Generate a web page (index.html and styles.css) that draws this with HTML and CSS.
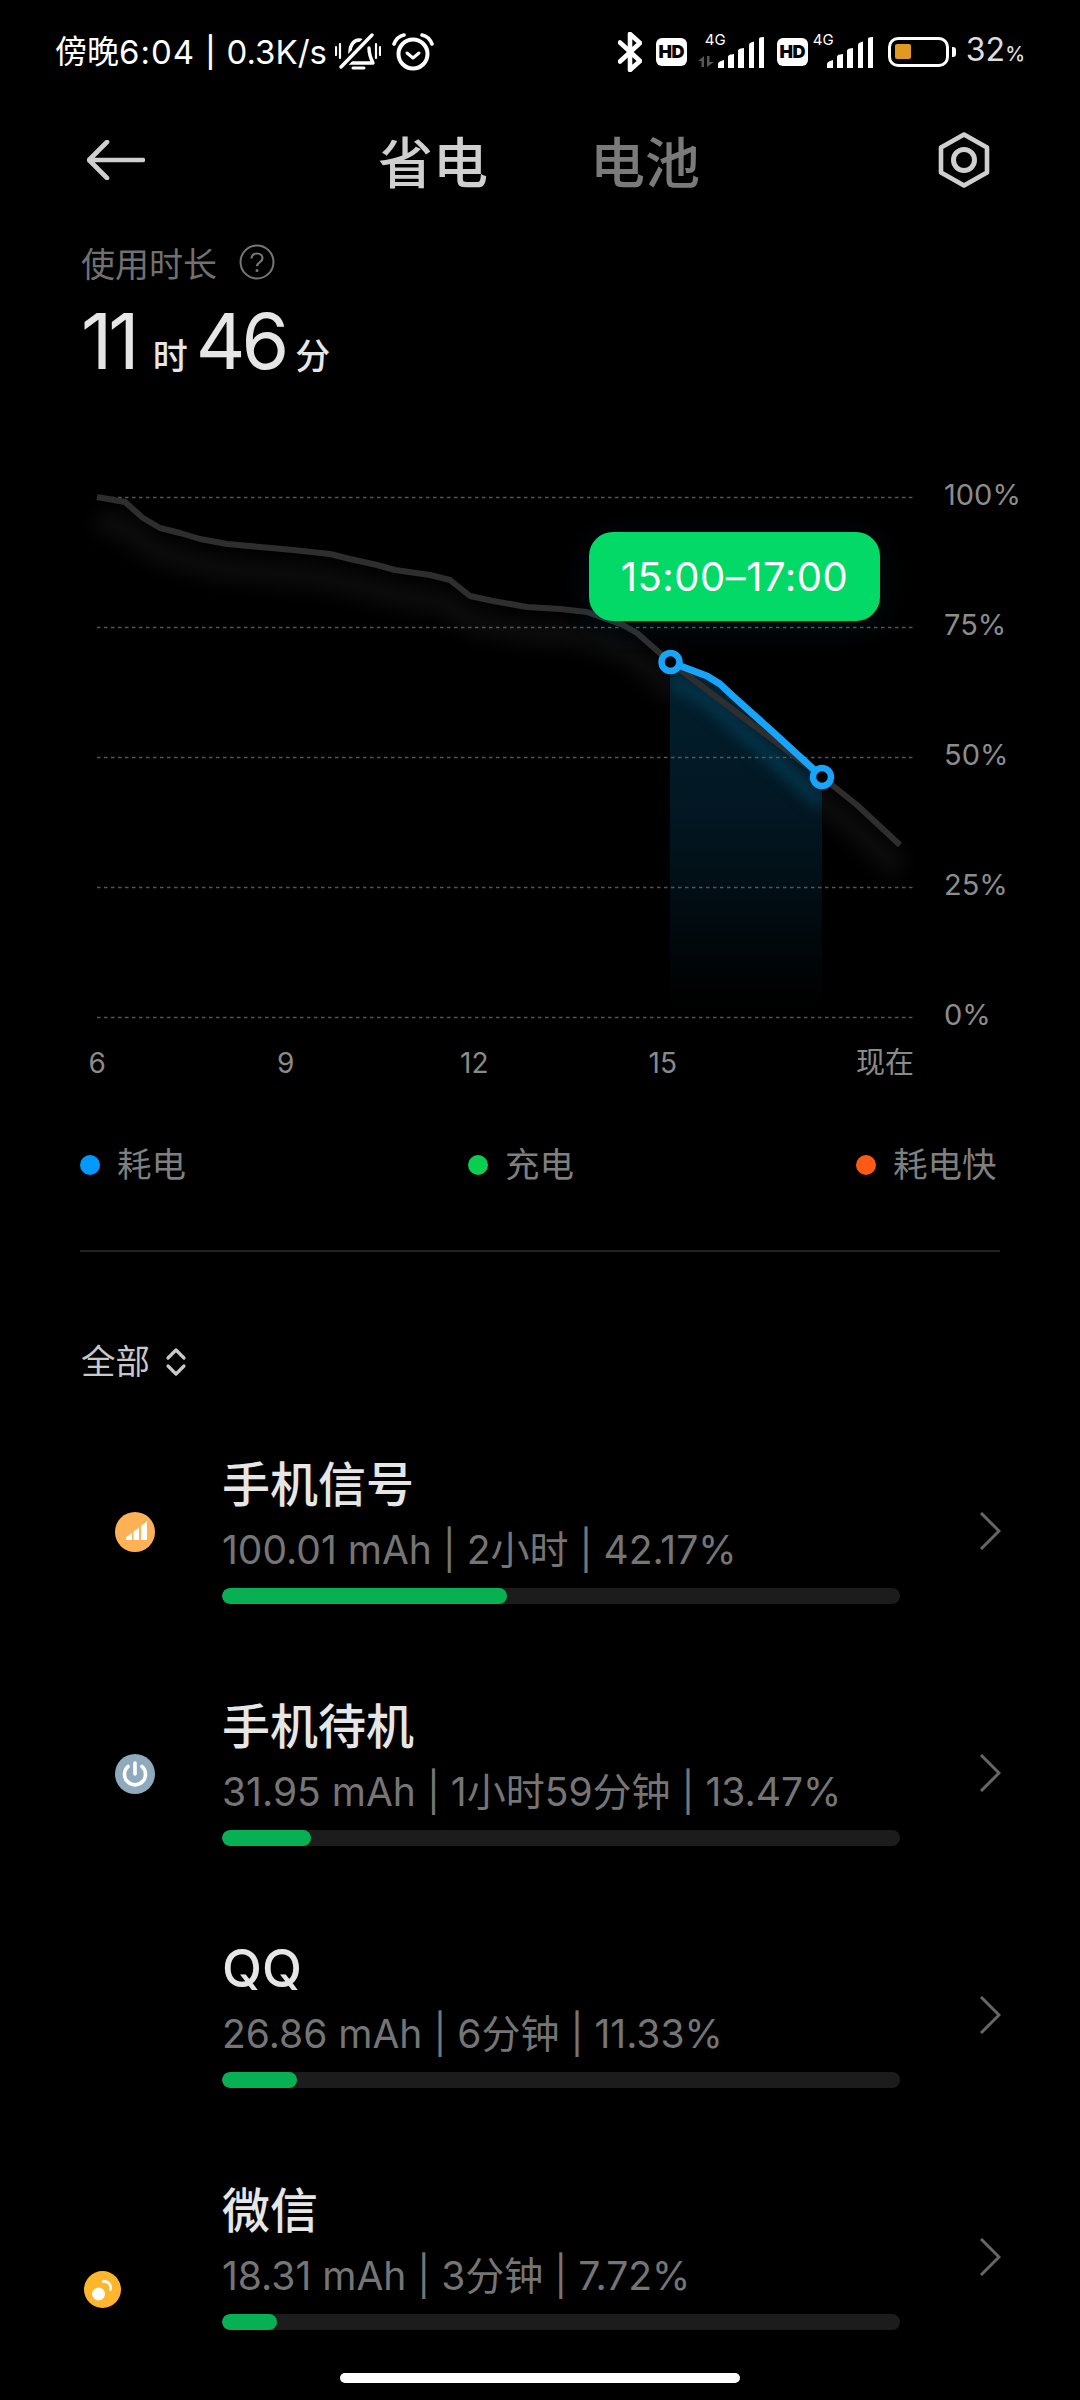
FILE: index.html
```html
<!DOCTYPE html>
<html lang="zh-CN">
<head>
<meta charset="utf-8">
<title>省电</title>
<link rel="stylesheet" href="styles.css">
</head>
<body>
<div class="page">
  <header class="status">
    <div class="status-left">
      <span class="status-cjk">傍晚</span><span class="status-num">6:04</span><span class="status-sep">|</span><span>0.3K/s</span>
      <svg class="ic-bell" viewBox="0 0 46 38" width="46" height="38" aria-hidden="true">
        <path d="M12 30c2-3 3-6 3-11 0-7 4-12 9-12 3 0 5 1 7 3M34 15c0 7 2 11 4 15H9" fill="none" stroke="#fff" stroke-width="3.4" stroke-linejoin="round" stroke-linecap="round"/>
        <path d="M6 34 37 2" stroke="#000" stroke-width="8"/>
        <path d="M6 34 37 2" stroke="#fff" stroke-width="3.4" stroke-linecap="round"/>
        <path d="M18 35h11" stroke="#fff" stroke-width="3" stroke-linecap="round"/>
        <path d="M1 14v8M5 11v14M41 11v14M45 14v8" stroke="#fff" stroke-width="2.2" stroke-linecap="round"/>
      </svg>
      <svg class="ic-alarm" viewBox="0 0 42 38" width="42" height="38" aria-hidden="true">
        <circle cx="21" cy="21" r="14.5" fill="none" stroke="#fff" stroke-width="4"/>
        <path d="M15 20l6 5 6-5" fill="none" stroke="#fff" stroke-width="3" stroke-linecap="round" stroke-linejoin="round"/>
        <path d="M2 11C4 6 7 3 12 2M40 11C38 6 35 3 30 2" fill="none" stroke="#fff" stroke-width="3.6" stroke-linecap="round"/>
      </svg>
    </div>
    <div class="status-right">
      <svg class="ic-bt" viewBox="0 0 24 40" width="24" height="40" aria-hidden="true">
        <path d="M2 10.500l20 18.500-10 9V2l10 9L2 29.500" fill="none" stroke="#fff" stroke-width="4.600" stroke-linejoin="round" stroke-linecap="round"/>
      </svg>
      <span class="hd">HD</span>
      <span class="net net-first">
        <span class="net-label">4G</span>
        <svg class="arrows" viewBox="0 0 16 11" width="16" height="11" aria-hidden="true"><path d="M6 0v11H3.5V5H0zM9 11V0h2.500v6H16z" fill="#565656"/></svg>
        <svg class="bars" viewBox="0 0 48 31" width="48" height="31" aria-hidden="true"><path d="M1 31v-4q0-2 3-3l3-1v8zM11 31V20q0-2 3-2.500l3-.5v14zM21 31V14q0-2 3-2.500l3-.5v20zM32 31V8q0-2 2-2.500l3-1V31zM42 31V2q0-1.500 2-1.700L47 0v31z" fill="#fff"/></svg>
      </span>
      <span class="hd hd-second">HD</span>
      <span class="net">
        <span class="net-label">4G</span>
        <svg class="bars" viewBox="0 0 48 31" width="48" height="31" aria-hidden="true"><path d="M1 31v-4q0-2 3-3l3-1v8zM11 31V20q0-2 3-2.500l3-.5v14zM21 31V14q0-2 3-2.500l3-.5v20zM32 31V8q0-2 2-2.500l3-1V31zM42 31V2q0-1.500 2-1.700L47 0v31z" fill="#fff"/></svg>
      </span>
      <span class="battery"><span class="battery-level"></span></span>
      <span class="battery-tip"></span>
      <span class="battery-text">32<small>%</small></span>
    </div>
  </header>

  <nav class="nav">
    <svg class="ic-back" viewBox="0 0 58 40" width="58" height="40" aria-hidden="true">
      <path d="M20 2 2 20l18 18M3 20h53" fill="none" stroke="#cfcfcf" stroke-width="4.600" stroke-linecap="round" stroke-linejoin="round"/>
    </svg>
    <div class="tabs">
      <span class="tab tab-active">省电</span>
      <span class="tab">电池</span>
    </div>
    <svg class="ic-gear" viewBox="0 0 54 58" width="54" height="58" aria-hidden="true">
      <path d="M27 3.500 50 16.500v25L27 54.500 4 41.500v-25z" fill="none" stroke="#cfcfcf" stroke-width="4.600" stroke-linejoin="round"/>
      <circle cx="27" cy="29" r="10.500" fill="none" stroke="#cfcfcf" stroke-width="5"/>
    </svg>
  </nav>

  <section class="usage">
    <div class="usage-label">使用时长
      <svg class="ic-help" viewBox="0 0 36 36" width="36" height="36" aria-hidden="true">
        <circle cx="18" cy="18" r="16.500" fill="none" stroke="#767676" stroke-width="2"/>
        <path d="M12.500 14.500c0-3 2.400-5 5.500-5s5.500 2 5.500 4.800c0 3.700-5.500 3.900-5.500 8" fill="none" stroke="#767676" stroke-width="2.200"/>
        <circle cx="18" cy="26.500" r="1.500" fill="#767676"/>
      </svg>
    </div>
    <div class="usage-value">
      <span class="big">11</span><span class="unit">时</span><span class="big">46</span><span class="unit unit-min">分</span>
    </div>
  </section>

  <section class="chart">
    <svg class="plot" viewBox="0 470 1080 570" width="1080" height="570" aria-hidden="true">
      <defs>
        <linearGradient id="areaFill" x1="0" y1="660" x2="0" y2="1005" gradientUnits="userSpaceOnUse">
          <stop offset="0" stop-color="#02202f"/>
          <stop offset="0.45" stop-color="#021722"/>
          <stop offset="1" stop-color="#000"/>
        </linearGradient>
        <filter id="soft" x="-20%" y="-20%" width="140%" height="140%" color-interpolation-filters="sRGB"><feGaussianBlur stdDeviation="7"/></filter>
        <filter id="softer" x="-20%" y="-20%" width="140%" height="140%" color-interpolation-filters="sRGB"><feGaussianBlur stdDeviation="9"/></filter>
        <clipPath id="areaClip"><path d="M670 662 707 676 720 684 735 698 773 732 822 777V1005H670z"/></clipPath>
      </defs>
      <path class="glow" d="M97 522 125 527 143 543 160 553 180 558 200 564 227 569 260 572 293 575 330 579 350 584 377 590 395 595 430 600 450 605 470 621 493 626 527 632 560 634 587 637 623 650 637 658 670 687 707 701 735 723 773 757 822 802 857 830 900 870" filter="url(#softer)"/>
      <path d="M670 662 707 676 720 684 735 698 773 732 822 777V1005H670z" fill="url(#areaFill)"/>
      <g clip-path="url(#areaClip)">
        <path class="glow-blue" d="M670 680 707 699 735 724 773 758 822 803" filter="url(#soft)"/>
      </g>
      <g class="grid">
        <path d="M97 497.500H914"/>
        <path d="M97 627.500H914"/>
        <path d="M97 757.500H914"/>
        <path d="M97 887.500H914"/>
        <path d="M97 1017.500H914"/>
      </g>
      <path class="line-grey" d="M97 497 125 502 143 518 160 528 180 533 200 539 227 544 260 547 293 550 330 554 350 559 377 565 395 570 430 575 450 580 470 596 493 601 527 607 560 609 587 612 623 625 637 633 670 662 822 777 857 805 900 845"/>
      <path class="line-blue" d="M670 662 707 676 720 684 735 698 773 732 822 777"/>
      <circle class="point" cx="670.500" cy="662" r="9"/>
      <circle class="point" cx="822" cy="777" r="9"/>
    </svg>
    <div class="pill">15:00–17:00</div>
    <div class="y-axis">
      <span>100%</span><span>75%</span><span>50%</span><span>25%</span><span>0%</span>
    </div>
  </section>

  <div class="x-axis">
    <span>6</span><span>9</span><span>12</span><span>15</span><span class="x-now">现在</span>
  </div>

  <div class="legend">
    <span class="legend-item"><i class="dot dot-blue"></i>耗电</span>
    <span class="legend-item"><i class="dot dot-green"></i>充电</span>
    <span class="legend-item"><i class="dot dot-orange"></i>耗电快</span>
  </div>

  <hr class="divider">

  <div class="filter">全部
    <svg class="ic-sort" viewBox="0 0 22 30" width="22" height="30" aria-hidden="true">
      <path d="M3 11l8-8 8 8M3 19l8 8 8-8" fill="none" stroke="#c8c8c8" stroke-width="3.200" stroke-linecap="round" stroke-linejoin="round"/>
    </svg>
  </div>

  <ul class="list">
    <li class="row">
      <svg class="app-icon" viewBox="0 0 40 40" width="40" height="40" aria-hidden="true">
        <circle cx="20" cy="20" r="20" fill="#ffb255"/>
        <path d="M11 28v-3l6-4v7zM18.500 28V19.500l5.500-4V28zM26 28V14l6-5v19z" fill="#fff"/>
      </svg>
      <div class="row-body">
        <div class="row-title">手机信号</div>
        <div class="row-sub">100.01 mAh | 2小时 | 42.17%</div>
        <div class="track"><div class="fill" style="width:42%"></div></div>
      </div>
      <svg class="chev" viewBox="0 0 22 38" width="22" height="38" aria-hidden="true"><path d="M2 1l18 18L2 37" fill="none" stroke="#666" stroke-width="3"/></svg>
    </li>
    <li class="row">
      <svg class="app-icon" viewBox="0 0 40 40" width="40" height="40" aria-hidden="true">
        <circle cx="20" cy="20" r="20" fill="#8fa9bd"/>
        <path d="M13 12.500a10.500 10.500 0 1 0 14 0" fill="none" stroke="#fff" stroke-width="3.600" stroke-linecap="round"/>
        <path d="M20 9v11" stroke="#fff" stroke-width="3.600" stroke-linecap="round"/>
      </svg>
      <div class="row-body">
        <div class="row-title">手机待机</div>
        <div class="row-sub">31.95 mAh | 1小时59分钟 | 13.47%</div>
        <div class="track"><div class="fill" style="width:13.1%"></div></div>
      </div>
      <svg class="chev" viewBox="0 0 22 38" width="22" height="38" aria-hidden="true"><path d="M2 1l18 18L2 37" fill="none" stroke="#666" stroke-width="3"/></svg>
    </li>
    <li class="row">
      <span class="app-icon-empty"></span>
      <div class="row-body">
        <div class="row-title row-title-latin">QQ</div>
        <div class="row-sub">26.86 mAh | 6分钟 | 11.33%</div>
        <div class="track"><div class="fill" style="width:11%"></div></div>
      </div>
      <svg class="chev" viewBox="0 0 22 38" width="22" height="38" aria-hidden="true"><path d="M2 1l18 18L2 37" fill="none" stroke="#666" stroke-width="3"/></svg>
    </li>
    <li class="row">
      <svg class="app-icon app-icon-low" viewBox="0 0 37 37" width="37" height="37" aria-hidden="true">
        <circle cx="18.500" cy="18.500" r="18.500" fill="#ffb52c"/>
        <circle cx="14.500" cy="23" r="6.500" fill="#fff"/>
        <path d="M19 10.500a6.500 6.500 0 0 1 7.500 8" fill="none" stroke="#fff" stroke-width="2.600" stroke-linecap="round"/>
      </svg>
      <div class="row-body">
        <div class="row-title">微信</div>
        <div class="row-sub">18.31 mAh | 3分钟 | 7.72%</div>
        <div class="track"><div class="fill" style="width:8.1%"></div></div>
      </div>
      <svg class="chev" viewBox="0 0 22 38" width="22" height="38" aria-hidden="true"><path d="M2 1l18 18L2 37" fill="none" stroke="#666" stroke-width="3"/></svg>
    </li>
  </ul>
  <div class="home-bar"></div>
</div>
</body>
</html>
```

FILE: styles.css
```css
* { box-sizing: border-box; }
html, body { margin: 0; padding: 0; background: #000; }
body { font-family: Inter, "Noto Sans CJK SC", sans-serif; color: #e6e6e6; }
.page { position: relative; width: 1080px; height: 2400px; overflow: hidden; background: #000; }
svg { display: block; flex: none; }

.status { display: flex; justify-content: space-between; align-items: center; height: 104px; padding: 0 55px 0 55px; color: #fff; }
.status-left { display: flex; align-items: center; font-size: 33px; line-height: 40px; }
.status-cjk { font-size: 32px; }
.status-num { letter-spacing: 1px; }
.status-sep { margin: 0 11px 0 10px; font-size: 30px; font-weight: 500; }
.ic-bell { margin-left: 8px; }
.ic-alarm { margin-left: 11px; }
.status-right { display: flex; align-items: center; position: relative; }
.ic-bt { margin-right: 14px; }
.hd { display: block; width: 31px; height: 28px; line-height: 28px; border-radius: 6px; background: #fff; color: #000; font-size: 18px; font-weight: 900; text-align: center; letter-spacing: -0.5px; }
.hd-second { margin-left: 12px; }
.net { position: relative; display: block; width: 61px; height: 32px; margin-left: 5px; }
.net-first { margin-left: 11px; width: 67px; }
.net-label { position: absolute; top: -4px; left: 0; font-size: 15px; line-height: 16px; color: #fff; }
.net-first .net-label { left: 7px; }
.bars { position: absolute; right: 0; bottom: 0; }
.arrows { position: absolute; left: 0; bottom: 1px; }
.battery { display: block; width: 61px; height: 30px; margin-left: 14px; border: 3.5px solid #fff; border-radius: 10px; padding: 4px; }
.battery-level { display: block; width: 16px; height: 15px; border-radius: 2px; background: #e09a20; }
.battery-tip { display: block; width: 4px; height: 10px; margin-left: 3px; border-radius: 0 3px 3px 0; background: #fff; }
.battery-text { margin-left: 10px; font-size: 32px; line-height: 40px; color: #ddd; }
.battery-text small { font-size: 20px; font-weight: 500; }

.nav { position: relative; display: flex; justify-content: space-between; align-items: center; height: 112px; padding: 0 89px 0 87px; }
.tabs { position: absolute; left: 378px; top: 3px; height: 112px; display: flex; align-items: center; gap: 102px; }
.tab { font-size: 55px; line-height: 62px; color: #7a7a7a; font-weight: 500; }
.tab-active { color: #d0d0d0; }

.usage { height: 254px; padding: 24px 0 0 81px; }
.usage-label { display: flex; align-items: center; gap: 22px; height: 44px; font-size: 34px; color: #717171; }
.usage-value { display: flex; align-items: baseline; height: 86px; margin-top: 14px; line-height: 86px; }
.big { font-size: 77px; font-weight: 400; letter-spacing: -4px; }
.unit { font-size: 35px; font-weight: 500; margin: 0 8px 0 17px; }
.unit-min { margin-left: 10px; }

.chart { position: relative; height: 570px; }
.plot { position: absolute; left: 0; top: 0; }
.grid path { stroke: #555; stroke-width: 1.600; stroke-dasharray: 3.500 3.500; fill: none; }
.line-grey { fill: none; stroke: #2e2e2e; stroke-width: 6; stroke-linejoin: round; }
.line-blue { fill: none; stroke: #18a4f8; stroke-width: 7; stroke-linejoin: round; }
.point { fill: #000; stroke: #18a4f8; stroke-width: 6.500; }
.glow { fill: none; stroke: #0c0c0c; stroke-width: 24; }
.glow-blue { fill: none; stroke: #05364c; stroke-width: 14; }
.pill { position: absolute; left: 589px; top: 62px; width: 291px; height: 89px; border-radius: 24px; background: #03d966; color: #fff; font-size: 40px; line-height: 89px; text-align: center; letter-spacing: 0.5px; box-shadow: 0 6px 30px rgba(0, 110, 170, 0.14); }
.y-axis { position: absolute; left: 944px; top: -41px; display: grid; grid-auto-rows: 130px; font-size: 29px; color: #8c8c8c; align-items: center; }

.x-axis { display: flex; height: 46px; padding-left: 3px; font-size: 28px; line-height: 46px; color: #8a8a8a; }
.x-axis span { width: 188.500px; text-align: center; }
.x-axis .x-now { width: 157px; text-align: right; font-size: 29px; }

.legend { display: grid; grid-template-columns: 388px 388px 1fr; height: 54px; margin-top: 52px; padding-left: 80px; font-size: 34.500px; line-height: 54px; color: #7f7f7f; }
.legend-item { display: flex; align-items: center; gap: 17px; }
.dot { display: block; width: 20px; height: 20px; border-radius: 50%; }
.dot-blue { background: #0099ff; }
.dot-green { background: #0ace4f; }
.dot-orange { background: #ff5a14; }

.divider { width: 920px; height: 2px; margin: 58px 0 0 80px; border: 0; background: #222; }

.filter { display: flex; align-items: center; gap: 15px; height: 50px; margin: 85px 0 0 81px; font-size: 34.500px; line-height: 50px; color: #c8c8c8; }

.list { list-style: none; margin: 53px 0 0; padding: 0; }
.row { display: grid; grid-template-columns: 222px 678px 1fr; height: 242px; align-items: start; }
.app-icon { margin: 72px 0 0 115px; }
.app-icon-low { margin: 105px 0 0 84px; }
.row-body { padding-top: 15px; }
.row-title { font-size: 48px; line-height: 60px; color: #e6e6e6; font-weight: 500; }
.row-title-latin { font-size: 52px; }
.row-sub { margin-top: 10px; font-size: 39px; line-height: 50px; color: #757575; white-space: nowrap; }
.track { height: 16px; margin-top: 13px; border-radius: 8px; background: #1c1c1c; overflow: hidden; }
.fill { height: 16px; border-radius: 8px; background: #07b052; }
.chev { margin: 72px 0 0 79px; }

.home-bar { position: absolute; left: 340px; top: 2373px; width: 400px; height: 10px; border-radius: 5px; background: #fff; }
```
